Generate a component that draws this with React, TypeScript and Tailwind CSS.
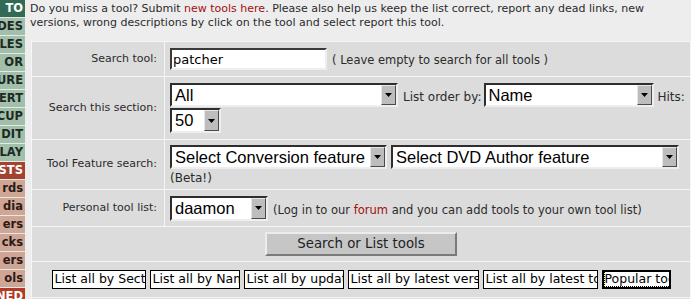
import React from 'react';

const SIDE: { t: string; c: string }[] = [
  { t: 'TO', c: 'bg-[#336a56] text-white' },
  { t: 'DES', c: 'bg-[#a2bfac] text-[#1c2a22]' },
  { t: 'LES', c: 'bg-[#a2bfac] text-[#1c2a22]' },
  { t: 'OR', c: 'bg-[#a2bfac] text-[#1c2a22]' },
  { t: 'URE', c: 'bg-[#a2bfac] text-[#1c2a22]' },
  { t: 'ERT', c: 'bg-[#a2bfac] text-[#1c2a22]' },
  { t: 'CUP', c: 'bg-[#a2bfac] text-[#1c2a22]' },
  { t: 'DIT', c: 'bg-[#a2bfac] text-[#1c2a22]' },
  { t: 'LAY', c: 'bg-[#a2bfac] text-[#1c2a22]' },
  { t: 'STS', c: 'bg-[#a5412f] text-white' },
  { t: 'rds', c: 'bg-[#cfa596] text-[#2a1a16]' },
  { t: 'dia', c: 'bg-[#cfa596] text-[#2a1a16]' },
  { t: 'ers', c: 'bg-[#cfa596] text-[#2a1a16]' },
  { t: 'cks', c: 'bg-[#cfa596] text-[#2a1a16]' },
  { t: 'ers', c: 'bg-[#cfa596] text-[#2a1a16]' },
  { t: 'ols', c: 'bg-[#cfa596] text-[#2a1a16]' },
  { t: 'NED', c: 'bg-[#b03c28] text-white' },
];

const LIST_BUTTONS: { label: string; w: string }[] = [
  { label: 'List all by Section', w: 'w-[94px]' },
  { label: 'List all by Name', w: 'w-[90px]' },
  { label: 'List all by update', w: 'w-[100px]' },
  { label: 'List all by latest versions', w: 'w-[131px]' },
  { label: 'List all by latest tools', w: 'w-[115px]' },
];

function Arrow() {
  return (
    <div className="w-[15px] h-full bg-[#bdbdbd] border border-t-[#e6e6e6] border-l-[#e6e6e6] border-r-[#4a4a4a] border-b-[#4a4a4a] flex items-center justify-center shrink-0">
      <svg width="7" height="4" viewBox="0 0 7 4">
        <polygon points="0,0 7,0 3.5,4" fill="#000" />
      </svg>
    </div>
  );
}

function FakeSelect({ value, className }: { value: string; className: string }) {
  return (
    <div className={`inline-flex bg-white border-2 border-t-[#2e2e2e] border-l-[#2e2e2e] border-r-[#eeeeee] border-b-[#eeeeee] ${className}`}>
      <div className="flex-1 flex items-center pl-[3px] overflow-hidden whitespace-nowrap font-['Liberation_Sans',Arial,sans-serif] text-[16.5px] leading-none text-black">
        {value}
      </div>
      <Arrow />
    </div>
  );
}

function Label({ children }: { children: React.ReactNode }) {
  return (
    <div className="bg-[#dcdcdc] flex items-center justify-end pr-[7px] whitespace-nowrap">{children}</div>
  );
}

export default function App() {
  return (
    <div className="w-[691px] h-[299px] overflow-hidden bg-[#ededed] flex font-['DejaVu_Sans',Verdana,sans-serif] text-[11px] text-[#2b2b2b]">
      <div className="w-[25px] shrink-0 flex flex-col">
        {SIDE.map((s, i) => (
          <div
            key={i}
            className={`h-[18px] shrink-0 border-b border-[#e4e9e4] flex items-center justify-end pr-[2px] overflow-hidden whitespace-nowrap font-bold text-[11.5px] leading-none ${s.c}`}
          >
            {s.t}
          </div>
        ))}
      </div>

      <div className="flex-1 min-w-0 pl-[5px]">
        <div className="pt-[2px] leading-[14px] whitespace-nowrap">
          Do you miss a tool? Submit <span className="text-[#a01010]">new tools here</span>. Please also help us keep the list correct, report any dead links, new
          <br />
          versions, wrong descriptions by click on the tool and select report this tool.
        </div>

        <div className="mt-[11px] ml-[1px] bg-[#f6f6f6] p-[1px] grid grid-cols-[132px_1fr] gap-[1px]">
          {/* search tool */}
          <Label>Search tool:</Label>
          <div className="bg-[#dcdcdc] h-[34px] flex items-center pl-[5px]">
            <div className="flex items-baseline">
              <div className="w-[157px] h-[22px] bg-white border-2 border-t-[#3a3a3a] border-l-[#3a3a3a] border-r-[#eeeeee] border-b-[#eeeeee] flex items-center pl-[1px] text-[13px] text-black leading-none">
                patcher
              </div>
              <span className="ml-[5px] text-[11.5px]">( Leave empty to search for all tools )</span>
            </div>
          </div>

          {/* section */}
          <Label>Search this section:</Label>
          <div className="bg-[#dcdcdc] h-[62px] flex flex-col pt-[6px] pl-[5px] gap-[1px]">
            <div className="flex items-baseline whitespace-nowrap text-[12px]">
              <FakeSelect value="All" className="w-[228px] h-[24px]" />
              <span className="ml-[5px]">List order by:</span>
              <FakeSelect value="Name" className="w-[170px] h-[24px] ml-[2px]" />
              <span className="ml-[4px]">Hits:</span>
            </div>
            <FakeSelect value="50" className="w-[51px] h-[25px]" />
          </div>

          {/* feature */}
          <Label>Tool Feature search:</Label>
          <div className="bg-[#dcdcdc] h-[49px] flex flex-col pt-[5px] pl-[5px]">
            <div className="flex gap-[4px]">
              <FakeSelect value="Select Conversion feature" className="w-[217px] h-[24px]" />
              <FakeSelect value="Select DVD Author feature" className="w-[288px] h-[24px]" />
            </div>
            <div className="mt-[2px] leading-[14px] text-[12px]">(Beta!)</div>
          </div>

          {/* personal */}
          <Label>Personal tool list:</Label>
          <div className="bg-[#dcdcdc] h-[36px] flex items-center pl-[5px]">
            <div className="flex items-baseline whitespace-nowrap">
              <FakeSelect value="daamon" className="w-[98px] h-[25px]" />
              <span className="ml-[5px] text-[11.5px]">
                (Log in to our <span className="text-[#a01010]">forum</span> and you can add tools to your own tool list)
              </span>
            </div>
          </div>

          {/* submit */}
          <div className="col-span-2 bg-[#dcdcdc] h-[34px] flex items-center justify-center">
            <button className="w-[192px] h-[24px] bg-[#c6c6c6] border-2 border-t-[#ececec] border-l-[#ececec] border-r-[#7a7a7a] border-b-[#7a7a7a] text-[13.3px] text-[#1e1e1e] leading-none">
              Search or List tools
            </button>
          </div>

          {/* list buttons */}
          <div className="col-span-2 bg-[#dcdcdc] h-[35px] flex items-center justify-center gap-[4px]">
            {LIST_BUTTONS.map(b => (
              <button
                key={b.label}
                className={`${b.w} h-[19px] bg-white border border-black text-[12.5px] text-black leading-none text-left pl-[2px] overflow-hidden whitespace-nowrap`}
              >
                {b.label}
              </button>
            ))}
            <button className="w-[69px] h-[19px] bg-white border-2 border-black text-[12.5px] text-black leading-none text-left pl-[1px] overflow-hidden whitespace-nowrap">
              <span className="outline outline-1 outline-dotted outline-black">Popular tools</span>
            </button>
          </div>

          <div className="col-span-2 bg-[#dcdcdc] h-[20px]" />
        </div>
      </div>
    </div>
  );
}
